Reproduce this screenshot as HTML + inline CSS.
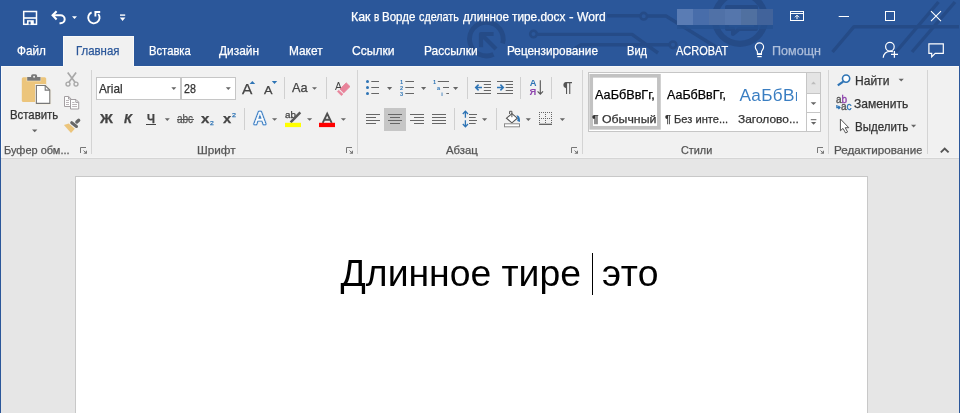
<!DOCTYPE html>
<html><head><meta charset="utf-8"><title>Word</title>
<style>
html,body{margin:0;padding:0;}
body{width:960px;height:413px;overflow:hidden;position:relative;background:#e6e6e6;font-family:"Liberation Sans",sans-serif;}
.t{position:absolute;white-space:nowrap;display:block;transform-origin:0 0;-webkit-text-stroke:0.25px;}
.a{position:absolute;}
.sep{position:absolute;width:1px;background:#d4d4d4;}
svg{position:absolute;overflow:visible;}
</style></head><body><div id="w" style="position:absolute;left:0;top:0;width:960px;height:413px;overflow:hidden;will-change:transform">

<div class="a" style="left:0;top:0;width:960px;height:66px;background:#2b579a"></div>
<svg width="960" height="66" style="left:0;top:0" viewBox="0 0 960 66" fill="none" stroke="#254b87" stroke-width="3.4" stroke-linejoin="round">
<!-- circle with arrow -->
<path d="M502.6 43.4 A16.8 16.8 0 1 0 493.5 54.3" stroke-width="4.8"/>
<path d="M496 49 L482 35 M481 47.3 V34 H493.6" stroke-width="4.2"/>
<!-- trace 1 -->
<circle cx="533.5" cy="34" r="3.3" stroke-width="2.6"/>
<path d="M537 34.4 H632 L658 53 M575 48.5 L581 44.8 H669.5"/>
<circle cx="673" cy="44.8" r="3.3" stroke-width="2.6"/>
<!-- trace 2 -->
<path d="M607 15.8 H640"/>
<circle cx="643.7" cy="16.2" r="3.3" stroke-width="2.6"/>
<path d="M647.5 16 H666 L716 47"/>
<!-- big circle w/ bubble -->
<circle cx="739.9" cy="18.6" r="25.2" stroke-width="6.2"/>
<path d="M727 7 V29 H733 V34 L739 29 H756 V7 Z" stroke-width="4"/>
<!-- right traces -->
<path d="M832.5 52 L854 26.7 H959"/>
<path d="M896 52 L938.5 2"/>
<path d="M912 52 L955 2"/>
</svg>

<div class="a" style="left:63px;top:36px;width:71px;height:31px;background:#f1f1f1;border:1px solid #f9f9f9;border-bottom:none;box-sizing:border-box"></div>
<div class="a" style="left:1px;top:66px;width:958px;height:93px;background:#f1f1f1"></div>
<div class="a" style="left:1px;top:66px;width:62px;height:1px;background:#f9f9f9"></div><div class="a" style="left:134px;top:66px;width:825px;height:1px;background:#f9f9f9"></div><div class="a" style="left:1px;top:66px;width:1px;height:92px;background:#f9f9f9"></div>
<div class="a" style="left:1px;top:157px;width:958px;height:1px;background:#f4f4f4"></div><div class="a" style="left:1px;top:158px;width:958px;height:1px;background:#d5d5d5"></div>
<div class="a" style="left:0;top:66px;width:1px;height:347px;background:#2b579a"></div>
<div class="a" style="left:959px;top:66px;width:1px;height:347px;background:#2b579a"></div>
<div class="a" style="left:75px;top:176px;width:793px;height:240px;background:#fff;border:1px solid #c8c8c8;box-sizing:border-box"></div>
<span class="t" style="left:351.00px;top:10.00px;font-size:12.2px;line-height:12.2px;color:#fff;transform:translateY(0.50px) scaleX(1.0103);">Как</span>
<span class="t" style="left:374.00px;top:10.00px;font-size:12.2px;line-height:12.2px;color:#fff;transform:translateY(0.50px) scaleX(0.8181);">в</span>
<span class="t" style="left:381.60px;top:10.00px;font-size:12.2px;line-height:12.2px;color:#fff;transform:translateY(0.50px) scaleX(0.9453);">Ворде</span>
<span class="t" style="left:418.80px;top:10.00px;font-size:12.2px;line-height:12.2px;color:#fff;transform:translateY(0.50px) scaleX(0.8832);">сделать</span>
<span class="t" style="left:463.30px;top:10.00px;font-size:12.2px;line-height:12.2px;color:#fff;transform:translateY(0.50px) scaleX(0.9586);">длинное</span>
<span class="t" style="left:511.60px;top:10.00px;font-size:12.2px;line-height:12.2px;color:#fff;transform:translateY(0.50px) scaleX(0.9686);">тире.docx</span>
<span class="t" style="left:568.80px;top:10.00px;font-size:12.2px;line-height:12.2px;color:#fff;transform:translateY(0.50px) scaleX(1.1323);">-</span>
<span class="t" style="left:576.90px;top:10.00px;font-size:12.2px;line-height:12.2px;color:#fff;transform:translateY(0.50px) scaleX(0.9922);">Word</span>
<div class="a" style="left:677px;top:9px;width:16px;height:16px;background:#5a7cb4"></div><div class="a" style="left:693px;top:9px;width:16px;height:16px;background:#486daa"></div><div class="a" style="left:709px;top:9px;width:16px;height:16px;background:#5071a7"></div><div class="a" style="left:725px;top:9px;width:16px;height:16px;background:#5576ac"></div><div class="a" style="left:741px;top:9px;width:16px;height:16px;background:#5070a0"></div><div class="a" style="left:757px;top:9px;width:16px;height:16px;background:#41639b"></div><div class="a" style="left:677px;top:25px;width:96px;height:3.5px;background:#26508f;opacity:.75"></div>
<span class="t" style="left:16.60px;top:45.00px;font-size:12.2px;line-height:12.2px;color:#fff;transform:translateY(0.00px) scaleX(0.9633);">Файл</span>
<span class="t" style="left:76.30px;top:45.00px;font-size:12.2px;line-height:12.2px;color:#2b579a;transform:translateY(0.00px) scaleX(0.9368);">Главная</span>
<span class="t" style="left:148.90px;top:45.00px;font-size:12.2px;line-height:12.2px;color:#fff;transform:translateY(0.00px) scaleX(0.9226);">Вставка</span>
<span class="t" style="left:219.40px;top:45.00px;font-size:12.2px;line-height:12.2px;color:#fff;transform:translateY(0.00px) scaleX(0.9779);">Дизайн</span>
<span class="t" style="left:288.90px;top:45.00px;font-size:12.2px;line-height:12.2px;color:#fff;transform:translateY(0.00px) scaleX(0.9732);">Макет</span>
<span class="t" style="left:351.90px;top:45.00px;font-size:12.2px;line-height:12.2px;color:#fff;transform:translateY(0.00px) scaleX(0.9917);">Ссылки</span>
<span class="t" style="left:423.90px;top:45.00px;font-size:12.2px;line-height:12.2px;color:#fff;transform:translateY(0.00px) scaleX(0.9789);">Рассылки</span>
<span class="t" style="left:506.90px;top:45.00px;font-size:12.2px;line-height:12.2px;color:#fff;transform:translateY(0.00px) scaleX(0.9670);">Рецензирование</span>
<span class="t" style="left:626.90px;top:45.00px;font-size:12.2px;line-height:12.2px;color:#fff;transform:translateY(0.00px) scaleX(0.9107);">Вид</span>
<span class="t" style="left:675.65px;top:45.00px;font-size:12.2px;line-height:12.2px;color:#fff;transform:translateY(0.00px) scaleX(0.9015);">ACROBAT</span>
<span class="t" style="left:771.50px;top:45.00px;font-size:12.2px;line-height:12.2px;color:#aebfdb;transform:translateY(0.00px) scaleX(1.0314);">Помощн</span>
<span class="t" style="left:4.40px;top:144.00px;font-size:10.9px;line-height:10.9px;color:#555;transform:translateY(0.70px) scaleX(1.0091);">Буфер обм...</span>
<span class="t" style="left:197.10px;top:144.00px;font-size:10.9px;line-height:10.9px;color:#555;transform:translateY(0.70px) scaleX(1.0764);">Шрифт</span>
<span class="t" style="left:446.10px;top:144.00px;font-size:10.9px;line-height:10.9px;color:#555;transform:translateY(0.70px) scaleX(1.0434);">Абзац</span>
<span class="t" style="left:681.20px;top:144.00px;font-size:10.9px;line-height:10.9px;color:#555;transform:translateY(0.70px) scaleX(0.9967);">Стили</span>
<span class="t" style="left:833.90px;top:144.00px;font-size:10.9px;line-height:10.9px;color:#555;transform:translateY(0.70px) scaleX(1.0682);width:82.19px;overflow:hidden;">Редактирование</span>
<div class="sep" style="left:91px;top:70px;height:84px"></div>
<div class="sep" style="left:357px;top:70px;height:84px"></div>
<div class="sep" style="left:582px;top:70px;height:84px"></div>
<div class="sep" style="left:828px;top:70px;height:84px"></div>
<div class="sep" style="left:927px;top:70px;height:84px"></div>
<span class="t" style="left:9.70px;top:108.00px;font-size:12.2px;line-height:12.2px;color:#333;transform:translateY(0.80px) scaleX(0.9340);">Вставить</span>
<div class="a" style="left:96px;top:77px;width:85px;height:23px;background:#fff;border:1px solid #c6c6c6;box-sizing:border-box"></div>
<div class="a" style="left:181px;top:77px;width:55px;height:23px;background:#fff;border:1px solid #c6c6c6;box-sizing:border-box"></div>
<span class="t" style="left:99.40px;top:82.00px;font-size:12.2px;line-height:12.2px;color:#333;transform:translateY(0.90px) scaleX(0.9667);">Arial</span>
<span class="t" style="left:183.90px;top:82.00px;font-size:12.2px;line-height:12.2px;color:#333;transform:translateY(0.90px) scaleX(0.8772);">28</span>
<span class="t" style="left:854.60px;top:75.00px;font-size:12.2px;line-height:12.2px;color:#333;transform:translateY(0.00px) scaleX(0.9880);">Найти</span>
<span class="t" style="left:854.10px;top:98.00px;font-size:12.2px;line-height:12.2px;color:#333;transform:translateY(0.00px) scaleX(0.9904);">Заменить</span>
<span class="t" style="left:854.90px;top:121.00px;font-size:12.2px;line-height:12.2px;color:#333;transform:translateY(0.00px) scaleX(0.9471);">Выделить</span>
<div class="a" style="left:588px;top:72px;width:233px;height:60px;background:#fff;border:1px solid #c6c6c6;box-sizing:border-box"></div>
<svg width="80" height="60" style="left:585px;top:70px" viewBox="585 70 80 60"><rect x="591.2" y="75.8" width="67.7" height="52" fill="none" stroke="#c2c2c2" stroke-width="3.7"/></svg>
<span class="t" style="left:594.90px;top:89.00px;font-size:12.5px;line-height:12.5px;color:#000;transform:translateY(0.00px) scaleX(1.0127);">АаБбВвГг,</span>
<span class="t" style="left:591.90px;top:114.00px;font-size:11.4px;line-height:11.4px;color:#333;transform:translateY(0.00px) scaleX(1.0791);">¶ Обычный</span>
<span class="t" style="left:667.00px;top:89.00px;font-size:12.5px;line-height:12.5px;color:#000;transform:translateY(0.00px) scaleX(0.9992);">АаБбВвГг,</span>
<span class="t" style="left:664.80px;top:114.00px;font-size:11.4px;line-height:11.4px;color:#333;transform:translateY(0.00px) scaleX(0.9745);">¶ Без инте...</span>
<span class="t" style="left:739.40px;top:86.00px;font-size:17.2px;line-height:17.2px;color:#3a7ec2;transform:translateY(0.60px) scaleX(1.0000);width:58.00px;overflow:hidden;letter-spacing:0.3px;-webkit-text-stroke:0;">АаБбВв</span>
<span class="t" style="left:737.60px;top:114.00px;font-size:11.4px;line-height:11.4px;color:#333;transform:translateY(0.00px) scaleX(1.0479);">Заголово...</span>
<span class="t" style="left:340.60px;top:255.00px;font-size:37.33px;line-height:37.33px;color:#000;letter-spacing:-0.011px;-webkit-text-stroke:0;">Длинное тире</span>
<span class="t" style="left:602.00px;top:255.00px;font-size:37.33px;line-height:37.33px;color:#000;letter-spacing:0.420px;-webkit-text-stroke:0;">это</span>
<div class="a" style="left:592px;top:253px;width:1px;height:42px;background:#000"></div>
<span class="t" style="left:100.44px;top:113.00px;font-size:12.2px;line-height:12.2px;color:#444;transform:translateY(0.00px) scaleX(1.1684);font-weight:bold;transform-origin:0 0;">Ж</span>
<span class="t" style="left:123.80px;top:113.00px;font-size:12.2px;line-height:12.2px;color:#444;transform:translateY(0.00px) scaleX(1.0612);font-weight:bold;font-style:italic;">К</span>
<span class="t" style="left:146.70px;top:113.00px;font-size:12.2px;line-height:12.2px;color:#444;transform:translateY(0.00px) scaleX(0.9328);font-weight:bold;">Ч</span>
<div class="a" style="left:146px;top:124px;width:10px;height:1px;background:#444"></div>
<span class="t" style="left:176.90px;top:113.00px;font-size:12.5px;line-height:12.5px;color:#555;transform:translateY(0.00px) scaleX(0.7990);">abc</span>
<div class="a" style="left:177px;top:119.4px;width:17px;height:1px;background:#555"></div>
<span class="t" style="left:201.10px;top:112.00px;font-size:13px;line-height:13px;color:#444;transform:translateY(0.00px) scaleX(1.1621);font-weight:bold;">x</span>
<span class="t" style="left:209.60px;top:120.00px;font-size:5.8px;line-height:5.8px;color:#2e74b5;transform:translateY(0.80px) scaleX(1.1784);">2</span>
<span class="t" style="left:222.80px;top:112.00px;font-size:13px;line-height:13px;color:#444;transform:translateY(0.00px) scaleX(1.1345);font-weight:bold;">x</span>
<span class="t" style="left:231.60px;top:113.00px;font-size:5.8px;line-height:5.8px;color:#2e74b5;transform:translateY(0.20px) scaleX(1.2404);">2</span>
<span class="t" style="left:241.65px;top:81.00px;font-size:14px;line-height:14px;color:#444;transform:translateY(0.90px) scaleX(1.1084);">A</span>
<span class="t" style="left:264.40px;top:84.00px;font-size:11.4px;line-height:11.4px;color:#444;transform:translateY(0.90px) scaleX(1.1179);">A</span>
<span class="t" style="left:291.65px;top:81.00px;font-size:12.2px;line-height:12.2px;color:#444;transform:translateY(0.75px) scaleX(1.0447);">Aa</span>
<span class="t" style="left:335.30px;top:80.00px;font-size:11.6px;line-height:11.6px;color:#444;transform:translateY(0.00px) scaleX(0.8918);-webkit-text-stroke:0;">A</span>
<span class="t" style="left:284.70px;top:110.00px;font-size:9px;line-height:9px;color:#444;transform:translateY(0.60px) scaleX(1.0891);">ab</span>
<!-- title bar icons -->
<svg width="960" height="66" style="left:0;top:0" viewBox="0 0 960 66" fill="none" stroke="#fff" stroke-width="1.5">
<!-- save -->
<rect x="23.7" y="11.5" width="12.8" height="12.8"/>
<path d="M24 18 H36.5" stroke-width="1.6"/>
<path d="M27 20.2 H33.8 V24.5 H27 Z" fill="#fff" stroke="none"/>
<rect x="28.6" y="21.6" width="2" height="2.9" fill="#2b579a" stroke="none"/>
<!-- undo -->
<path d="M56.6 11.2 L52.6 15.3 L56.6 19.4" stroke-width="2.1"/>
<path d="M53 15.3 H60.5 A4.2 4 0 0 1 60.5 23.3 H59.5" stroke-width="2"/>
<path d="M72 16.2 H77 L74.5 19 Z" fill="#fff" stroke="none"/>
<!-- redo -->
<path d="M91.6 12.4 A5.7 5.7 0 1 0 98.3 14" stroke-width="1.9"/>
<path d="M100.2 12 H95.4 V16.6" stroke-width="1.9"/>
<!-- customize -->
<path d="M120 15.1 H125.2" stroke-width="1.4"/>
<path d="M119.8 17.6 H125.4 L122.6 21 Z" fill="#fff" stroke="none"/>
<!-- ribbon display options -->
<rect x="790.5" y="11.5" width="13" height="9" stroke-width="1"/>
<path d="M790.5 13.5 H803.5" stroke-width="1"/>
<path d="M797 19.2 V15.4 M794.9 17.3 L797 15.2 L799.1 17.3" stroke-width="1"/>
<!-- minimize -->
<path d="M838.7 16.5 H849" stroke-width="1"/>
<!-- maximize -->
<rect x="885.5" y="11.5" width="9" height="9" stroke-width="1"/>
<!-- close -->
<path d="M931 11.2 L941 21.2 M941 11.2 L931 21.2" stroke-width="1.1"/>
<!-- lightbulb -->
<path d="M757.4 53.4 V52 C757.4 50.5 755.3 49.6 755.3 47.1 A4.15 4.15 0 0 1 763.6 47.1 C763.6 49.6 761.5 50.5 761.5 52 V53.4" stroke-width="1.15"/>
<rect x="756.9" y="53.1" width="5.1" height="1.9" fill="#fff" stroke="none"/>
<path d="M757.3 56.6 H761.7" stroke-width="1.2"/>
<!-- share -->
<circle cx="889.9" cy="46.7" r="4.3" stroke-width="1.2"/>
<path d="M883.2 57.8 C883.6 53.8 886.6 51.3 890.5 51.3 C891.5 51.3 892.3 51.5 893 51.8" stroke-width="1.2"/>
<path d="M891 54.4 H898 M894.4 51 V57.8" stroke-width="1.25"/>
<!-- comment -->
<path d="M928.9 43.8 H943.3 V53.4 H935.2 L931.7 56.9 V53.4 H928.9 Z" stroke-width="1.2"/>
</svg>
<!-- ribbon icons -->
<svg width="960" height="92" style="left:0;top:66px" viewBox="0 66 960 92" fill="none">
<!-- paste -->
<rect x="21.8" y="77.2" width="24.4" height="24.8" rx="1.6" fill="#ecc57c"/>
<path d="M26.6 77.2 H41.1 V81.3 H26.6 Z" fill="#f4e6c8"/><path d="M27.2 77 H40.5 V80.7 H27.2 Z" fill="#787878"/>
<path d="M31.1 77.6 V75.9 A1.7 1.7 0 0 1 32.8 74.2 H35.4 A1.7 1.7 0 0 1 37.1 75.9 V77.6 Z" fill="#787878"/>
<circle cx="34.1" cy="76.7" r="0.95" fill="#f4f4f4"/>
<path d="M36.4 85.5 H45.2 L49.8 90.1 V103.4 H36.4 Z" fill="#fff" stroke="#f5efe2" stroke-width="2.8"/>
<path d="M36.4 85.5 H45.2 L49.8 90.1 V103.4 H36.4 Z" fill="#fff" stroke="#787878" stroke-width="1.1"/>
<path d="M45.2 85.5 V90.1 H49.8" stroke="#787878" stroke-width="1.1"/>
<path d="M32 129.4 H37.4 L34.7 132.2 Z" fill="#666"/>
<!-- scissors -->
<g stroke="#a8a8a8" stroke-width="1.7">
<path d="M67.7 72.6 L75 82.3 M76.1 72.6 L68.9 82.3"/>
<circle cx="68" cy="84.1" r="2" stroke-width="1.35"/><circle cx="76" cy="84.1" r="2" stroke-width="1.35"/>
</g>
<!-- copy -->
<g stroke="#a39ea1" stroke-width="1">
<path d="M64.5 96.5 H68.7 L71 98.8 V106.5 H64.5 Z" fill="#fdfdfd"/>
<path d="M68.5 96.8 V99 H70.8" />
<path d="M70.5 99.5 H76 L78.7 102.2 V109 H70.5 Z" fill="#fdfdfd"/>
<path d="M75.8 99.8 V102.4 H78.5"/>
<path d="M66 100.5 H69 M66 102.5 H69 M66 104.5 H69 M72.2 104.5 H77 M72.2 106.5 H77 M72.2 102.5 H74.5" stroke="#b3adb0" stroke-width="0.9"/>
</g>
<!-- format painter -->
<path d="M63.9 125.1 L68.7 123.6 L74.8 128.8 L71 132.9 Z" fill="#ecc57c"/>
<path d="M71.7 122.7 L76.5 126.5" stroke="#686868" stroke-width="3" stroke-linecap="round"/>
<path d="M76.8 122 L78.7 120.3" stroke="#686868" stroke-width="3.3" stroke-linecap="round"/>
</svg>
<svg width="960" height="92" style="left:0;top:66px" viewBox="0 66 960 92" fill="none">
<!-- combo arrows -->
<g fill="#666">
<path d="M171.3 87.3 H176.3 L173.8 89.9 Z"/>
<path d="M225.8 87.3 H230.8 L228.3 89.9 Z"/>
<path d="M164.8 118.3 H169.8 L167.3 120.9 Z"/>
<path d="M312 87.2 H317 L314.5 89.8 Z"/>
<path d="M272 118.2 H277.2 L274.6 120.8 Z"/>
<path d="M307 118.2 H312.2 L309.6 120.8 Z"/>
<path d="M340.8 118.2 H346 L343.4 120.8 Z"/>
</g>
<!-- grow/shrink triangles -->
<path d="M249.6 84 H255.2 L252.4 80.9 Z" fill="#2e74b5"/>
<path d="M271.8 81 H277.2 L274.5 84.1 Z" fill="#2e74b5"/>
<!-- separators in font group -->
<g stroke="#d0d0d0" stroke-width="1">
<path d="M284.5 77 V99 M326.5 77 V99 M244.5 108 V130"/>
</g>
<!-- eraser -->
<path d="M346.2 82.8 L350 86.6 L343.7 92.9 L340 89.1 Z" fill="#e8839a" stroke="#e8839a" stroke-width="0.8" stroke-linejoin="round"/>
<path d="M338.6 90.2 L343 94.2 L341.3 95.6 L337.4 91.6 Z" fill="#e8839a" stroke="#e8839a" stroke-width="0.6" stroke-linejoin="round"/>
<!-- text effects A -->
<g font-family="Liberation Sans" font-size="16.2" stroke-linejoin="round" transform="translate(254.4 123.8)">
<text x="0" y="0" fill="#d3e2f3" stroke="#d3e2f3" stroke-width="3.8">A</text>
<text x="0" y="0" fill="#2e74b5" stroke="#3a7cc0" stroke-width="2.5">A</text>
<text x="0" y="0" fill="#fff" stroke="#fff" stroke-width="0.4">A</text>
</g>
<!-- highlighter -->
<path d="M300.3 112.3 L290.6 122.4" stroke="#5a5a5a" stroke-width="2.5"/>
<rect x="285" y="122.8" width="16" height="4.3" fill="#ffff00"/>
<!-- font color -->
<path d="M322.7 122.8 L327.2 113.6 L331.7 122.8 M324.4 119.7 H330" stroke="#505050" stroke-width="1.9" stroke-linejoin="miter"/>
<rect x="319" y="122.8" width="16" height="4.3" fill="#ff0000"/>
</svg>
<svg width="960" height="92" style="left:0;top:66px" viewBox="0 66 960 92" fill="none" shape-rendering="auto">
<!-- selected center bg -->
<rect x="384" y="108" width="22" height="23" fill="#c6c6c6"/>
<!-- separators -->
<g stroke="#d0d0d0" stroke-width="1">
<path d="M467.5 77 V99 M520.5 77 V99 M551.5 77 V99 M454.5 108 V130 M496.5 108 V130"/>
</g>
<!-- dropdown arrows -->
<g fill="#666">
<path d="M387 87.1 H392.2 L389.6 89.9 Z"/>
<path d="M421 87.1 H426.2 L423.6 89.9 Z"/>
<path d="M453 87.1 H458.2 L455.6 89.9 Z"/>
<path d="M482 118.2 H487.2 L484.6 120.9 Z"/>
<path d="M525.7 118.2 H530.9 L528.3 120.9 Z"/>
<path d="M559.8 118.2 H565 L562.4 120.9 Z"/>
</g>
<!-- bullets -->
<g fill="#2e74b5"><circle cx="367.5" cy="81.5" r="1.5"/><circle cx="367.5" cy="87.5" r="1.5"/><circle cx="367.5" cy="93.5" r="1.5"/></g>
<g stroke="#666" stroke-width="1.1">
<path d="M371.3 81.5 H379 M371.3 87.5 H379 M371.3 93.5 H379"/>
<!-- numbering lines -->
<path d="M405.3 81.5 H414 M405.3 87.5 H414 M405.3 93.5 H414"/>
<!-- multilevel lines -->
<path d="M437.8 81.5 H449 M443 87.5 H449 M446.3 93.5 H449"/>
<!-- indent lines -->
<path d="M475 81.5 H491 M483.8 84.5 H491 M483.8 87.5 H491 M483.8 90.5 H491 M475 93.5 H491"/>
<path d="M497 81.5 H513 M505.7 84.5 H513 M505.7 87.5 H513 M505.7 90.5 H513 M497 93.5 H513"/>
<!-- align -->
<path d="M366 114.5 H380 M366 117.5 H376 M366 120.5 H380 M366 123.5 H376"/>
<path d="M388 114.5 H402 M390 117.5 H400 M388 120.5 H402 M390 123.5 H400"/>
<path d="M410 114.5 H424 M414 117.5 H424 M410 120.5 H424 M414 123.5 H424"/>
<path d="M432 114.5 H446 M432 117.5 H446 M432 120.5 H446 M432 123.5 H446"/>
<!-- line spacing lines -->
<path d="M469 114.5 H477 M469 117.5 H475.7 M469 120.5 H477 M469 123.5 H475.7"/>
</g>
<!-- numbering digits -->
<g font-family="Liberation Sans" font-weight="bold" font-size="5.6" fill="#2e74b5">
<text x="400" y="83.5">1</text><text x="400" y="89.5">2</text><text x="400" y="95.5">3</text>
<text x="433" y="83.5">1</text><text x="437" y="89.5">a</text><text x="441.3" y="95.5">i</text>
</g>
<!-- indent arrows -->
<g stroke="#2e74b5" stroke-width="1.5">
<path d="M475.8 87.5 H482 M478.6 84.6 L475.7 87.5 L478.6 90.4"/>
<path d="M497 87.5 H503.2 M500.4 84.6 L503.3 87.5 L500.4 90.4"/>
<!-- line spacing arrows -->
<path d="M465.4 111.5 V117.8 M462.8 114 L465.4 111.3 L468 114" stroke-width="1.3"/>
<path d="M465.4 120.2 V126.6 M462.8 124 L465.4 126.8 L468 124" stroke-width="1.3"/>
</g>
<!-- sort -->
<g font-family="Liberation Sans" font-weight="bold" font-size="9.4">
<text x="529.8" y="86.4" fill="#2e74b5">A</text><text x="529.6" y="95.1" fill="#8e44ad">Я</text>
</g>
<path d="M540.3 80.3 V94 M537.6 91.3 L540.3 94.2 L543 91.3" stroke="#555" stroke-width="1.1"/>
<!-- pilcrow -->
<path d="M566 82 H572 V83.2 H570.3 V94 H569.2 V83.2 H567.1 V94 H566 V88.3 A3.2 3.2 0 0 1 566 82 Z" fill="#555"/>
<!-- paint bucket -->
<path d="M511.9 113.6 L517.3 118.2 L511.9 122.8 L506.5 118.2 Z" fill="#fff" stroke="#555" stroke-width="1.1"/>
<path d="M511.9 117.2 V111.3 H509.6 V114" stroke="#555" stroke-width="1"/>
<path d="M516.5 115.3 C519 115.5 520.2 117.5 520 122 L517.2 121 C517.8 119.5 517.8 118 516.5 115.3 Z" fill="#2e74b5"/>
<rect x="504.5" y="123.8" width="15" height="3" fill="#fff" stroke="#8a8a8a" stroke-width="1"/>
<!-- borders -->
<g stroke="#666" stroke-width="1" stroke-dasharray="1 1">
<path d="M539 112.5 H552 M539 118.5 H552 M539.5 112 V124 M545.5 112 V124 M551.5 112 V124"/>
</g>
<path d="M539 124.3 H552" stroke="#555" stroke-width="1.2"/>
</svg>
<svg width="960" height="92" style="left:0;top:66px" viewBox="0 66 960 92" fill="none">
<!-- gallery scroll buttons -->
<rect x="806.5" y="72.5" width="14" height="21" fill="#e4e4e4" stroke="#c6c6c6"/>
<rect x="806.5" y="93.5" width="14" height="19" fill="#fff" stroke="#c6c6c6"/>
<rect x="806.5" y="112.5" width="14" height="19" fill="#fff" stroke="#c6c6c6"/>
<path d="M811 84.2 H816 L813.5 81.4 Z" fill="#bdbdbd"/>
<path d="M810.7 102.2 H816.3 L813.5 105.1 Z" fill="#666"/>
<path d="M810.8 119.7 H816.4" stroke="#666" stroke-width="1"/>
<path d="M811 122 H816.2 L813.6 124.8 Z" fill="#666"/>
<!-- dialog launchers -->
<g stroke="#777" stroke-width="1">
<path d="M80.5 153 V147.5 H86.0" fill="none"/><path d="M83.5 150.5 L86.0 153" fill="none"/><path d="M87.0 150.3 V153.8 H83.4 Z" fill="#777" stroke="none"/>
<path d="M346.5 153 V147.5 H352.0" fill="none"/><path d="M349.5 150.5 L352.0 153" fill="none"/><path d="M353.0 150.3 V153.8 H349.4 Z" fill="#777" stroke="none"/>
<path d="M571.5 153 V147.5 H577.0" fill="none"/><path d="M574.5 150.5 L577.0 153" fill="none"/><path d="M578.0 150.3 V153.8 H574.4 Z" fill="#777" stroke="none"/>
<path d="M817.5 153 V147.5 H823.0" fill="none"/><path d="M820.5 150.5 L823.0 153" fill="none"/><path d="M824.0 150.3 V153.8 H820.4 Z" fill="#777" stroke="none"/>
</g>
<!-- find -->
<circle cx="846.1" cy="78.6" r="3.6" stroke="#2e74b5" stroke-width="1.6" fill="#fff"/>
<path d="M843.2 81.6 L837.8 85.4" stroke="#2e74b5" stroke-width="2.2"/>
<!-- replace -->
<g font-family="Liberation Sans" font-size="10" stroke-width="0.35">
<text x="836" y="102.7" fill="#555" stroke="#555">a</text><text x="841.6" y="102.7" fill="#8e44ad" stroke="#8e44ad">b</text>
<text x="840.9" y="110" fill="#555" stroke="#555">a</text><text x="846.6" y="110" fill="#2e74b5" stroke="#2e74b5">c</text>
</g>
<path d="M836.9 105 V107.5 H839.8 M838.4 105.9 L840 107.5 L838.4 109.1" stroke="#2e74b5" stroke-width="1.3"/>
<!-- select cursor -->
<path d="M840.4 119 V130.8 L843 128.4 L845.6 133 L847.6 132 L845.2 127.7 H848.8 Z" fill="#fff" stroke="#555" stroke-width="1" stroke-linejoin="round"/>
<!-- editing arrows -->
<g fill="#666">
<path d="M898.6 78.8 H903.8 L901.2 81.6 Z"/>
<path d="M911 124.8 H916.2 L913.6 127.6 Z"/>
</g>
<!-- collapse chevron -->
<path d="M940.8 152.4 L944.7 148.6 L948.6 152.4" stroke="#555" stroke-width="1.9"/>
</svg>

</div></body></html>
